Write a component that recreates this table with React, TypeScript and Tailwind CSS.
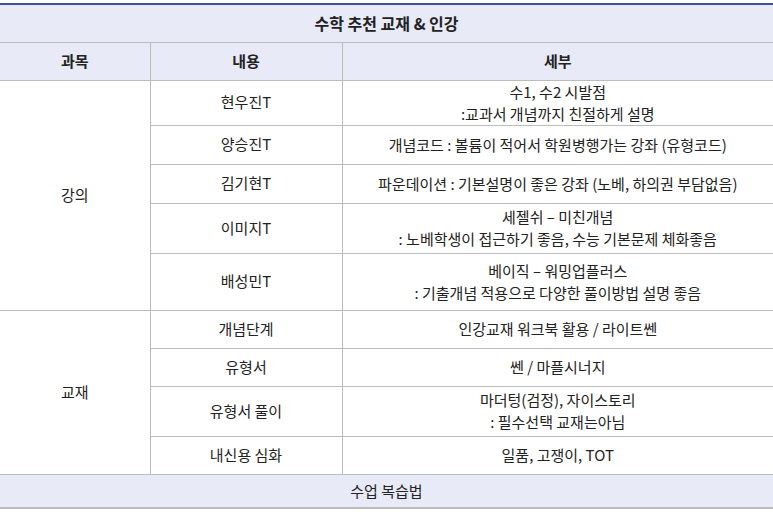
const lecture = [
  { name: "현우진T", detail: ["수1, 수2 시발점", ":교과서 개념까지 친절하게 설명"], h: "h-[45px]" },
  { name: "양승진T", detail: ["개념코드 : 볼륨이 적어서 학원병행가는 강좌 (유형코드)"], h: "h-[39px]" },
  { name: "김기현T", detail: ["파운데이션 : 기본설명이 좋은 강좌 (노베, 하의권 부담없음)"], h: "h-[39px]" },
  { name: "이미지T", detail: ["세젤쉬 – 미친개념", ": 노베학생이 접근하기 좋음, 수능 기본문제 체화좋음"], h: "h-[50px]" },
  { name: "배성민T", detail: ["베이직 – 워밍업플러스", ": 기출개념 적용으로 다양한 풀이방법 설명 좋음"], h: "h-[57px]" },
];

const books = [
  { name: "개념단계", detail: ["인강교재 워크북 활용 / 라이트쎈"], h: "h-[38px]" },
  { name: "유형서", detail: ["쎈 / 마플시너지"], h: "h-[38px]" },
  { name: "유형서 풀이", detail: ["마더텅(검정), 자이스토리", ": 필수선택 교재는아님"], h: "h-[50px]" },
  { name: "내신용 심화", detail: ["일품, 고쟁이, TOT"], h: "h-[38px]" },
];

const cell = "border border-[#bcbcbc] text-center align-middle p-0";

function Rows({ label, items }: { label: string; items: typeof lecture }) {
  return (
    <>
      {items.map((it, i) => (
        <tr key={it.name} className={it.h}>
          {i === 0 && (
            <td rowSpan={items.length} className={`${cell} border-l-0`}>
              {label}
            </td>
          )}
          <td className={cell}>{it.name}</td>
          <td className={`${cell} border-r-0 leading-[22px]`}>
            {it.detail.map((d) => (
              <div key={d}>{d}</div>
            ))}
          </td>
        </tr>
      ))}
    </>
  );
}

export default function App() {
  return (
    <div className="w-[773px] h-[513px] bg-white pt-[3px] text-[15px] text-[#222] font-['Noto_Sans_CJK_KR','Noto_Sans',sans-serif]">
      <table className="w-[773px] border-collapse table-fixed border-t-2 border-t-[#3d4f9c]">
        <colgroup>
          <col className="w-[150px]" />
          <col className="w-[192px]" />
          <col className="w-[431px]" />
        </colgroup>
        <tbody>
          <tr className="h-[38px] bg-[#e8eaf8]">
            <td colSpan={3} className={`${cell} border-x-0 border-t-0 font-bold text-[16px]`}>
              수학 추천 교재 &amp; 인강
            </td>
          </tr>
          <tr className="h-[38px] bg-[#e8eaf8] font-bold text-[15px]">
            <td className={`${cell} border-l-0`}>과목</td>
            <td className={cell}>내용</td>
            <td className={`${cell} border-r-0`}>세부</td>
          </tr>
          <Rows label="강의" items={lecture} />
          <Rows label="교재" items={books} />
          <tr className="h-[34px] bg-[#e8eaf8]">
            <td colSpan={3} className={`${cell} border-x-0 border-b-2`}>
              수업 복습법
            </td>
          </tr>
        </tbody>
      </table>
    </div>
  );
}
